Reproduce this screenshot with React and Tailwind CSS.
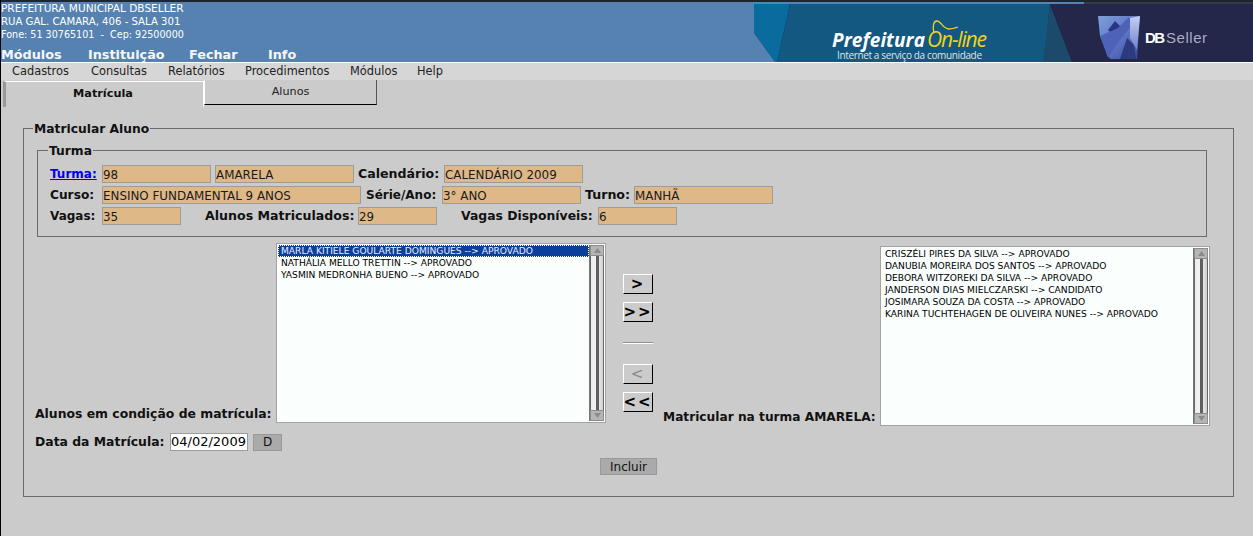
import React from 'react';

const font = { fontFamily: '"DejaVu Sans", sans-serif' };

function Logos() {
    return (
        <svg width="499" height="60" viewBox="754 2 499 60" className="shrink-0 block">
            <defs>
                <linearGradient id="cube" x1="0" y1="0" x2="1" y2="1">
                    <stop offset="0" stopColor="#7fa0dc" />
                    <stop offset="0.5" stopColor="#5f78c8" />
                    <stop offset="1" stopColor="#3a4a96" />
                </linearGradient>
                <linearGradient id="side" x1="0" y1="0" x2="0" y2="1">
                    <stop offset="0" stopColor="#c4d0f2" />
                    <stop offset="1" stopColor="#6f82c8" />
                </linearGradient>
            </defs>
            <rect x="754" y="2" width="499" height="60" fill="#1f2342" />
            <rect x="754" y="2" width="330" height="2" fill="#4f86b5" />
            <rect x="1084" y="2" width="169" height="2" fill="#3a3a3a" />
            <polygon points="754,4 790,4 777,62 775,62 754,33" fill="#0a6b9e" />
            <polygon points="754,33 775,62 754,62" fill="#5582b0" />
            <polygon points="790,4 1050,4 1044,62 777,62" fill="#135880" />
            <polygon points="1050,4 1072,62 1043,62" fill="#1b4a6b" />
            <polygon points="1072,62 1050,4 1253,4 1253,62" fill="#24264a" />
            <polygon points="1098,16 1140,16 1137,59 1110,59 1100,36" fill="url(#cube)" />
            <polygon points="1115,21 1124,30 1112,34 1108,30" fill="#2a3484" />
            <polygon points="1100,36 1118,28 1128,18 1138,18 1120,40 1108,58" fill="#4e63b8" />
            <polygon points="1120,59 1127,38 1134,45 1136,59" fill="#2c3a80" />
            <polygon points="1130,18 1140,16 1137,50 1130,38" fill="url(#side)" />
            <text x="832" y="47" fontFamily="Open Sans, sans-serif" fontWeight="700" fontStyle="italic" fontSize="19" textLength="93" fill="#ffffff">Prefeitura</text>
            <text x="927" y="47" fontFamily="Open Sans, sans-serif" fontStyle="italic" fontSize="21" textLength="60" fill="#f2d21a">On-line</text>
            <path d="M934 33 C932 25 934 21 937 21 C941 21 943 29 949 29 C952 29 955 28 958 27" fill="none" stroke="#f2d21a" strokeWidth="1.3" />
            <text x="837" y="59" fontFamily="Open Sans, sans-serif" fontSize="10" textLength="145" fill="#dde5ea">Internet a serviço da comunidade</text>
            <text x="1145" y="43" fontFamily="Liberation Sans, sans-serif" fontWeight="700" fontSize="15" textLength="20" fill="#ffffff">DB</text>
            <text x="1166" y="43" fontFamily="Liberation Sans, sans-serif" fontSize="15" textLength="41" fill="#a9adc4">Seller</text>
        </svg>
    );
}

function Scrollbar() {
    return (
        <div className="w-[15px] shrink-0 flex flex-col bg-[#8a8a8a] border-l border-[#777]">
            <div className="h-[11px] bg-[#b5b5b5] border border-[#8b8b8b] flex items-center justify-center text-[#8a8a8a]">
                <svg width="7" height="5" viewBox="0 0 7 5"><polygon points="3.5,0 7,5 0,5" fill="currentColor" /></svg>
            </div>
            <div className="flex-1 flex justify-center bg-gradient-to-r from-[#ececec] via-[#f4f4f4] to-[#cfcfcf] border-x border-[#666]">
                <div className="w-[3px] bg-[#5f5f5f]"></div>
            </div>
            <div className="h-[11px] bg-[#b5b5b5] border border-[#8b8b8b] flex items-center justify-center text-[#8a8a8a]">
                <svg width="7" height="5" viewBox="0 0 7 5"><polygon points="0,0 7,0 3.5,5" fill="currentColor" /></svg>
            </div>
        </div>
    );
}

function ListBox({ items, selected }) {
    return (
        <div className="w-[330px] h-[180px] flex border border-[#a3a3a3] bg-[#fafffd] p-[1px] shrink-0">
            <div className="flex-1 text-[9.13px] leading-[12px] text-black whitespace-nowrap overflow-hidden">
                {selected && (
                    <div className="bg-[#0a3f9c] text-[#e8eeff] pl-[3px] h-[12px] outline-1 -outline-offset-1 outline-dotted outline-white">{selected}</div>
                )}
                {items.map((t) => (
                    <div key={t} className="pl-[3px] h-[12px]">{t}</div>
                ))}
            </div>
            <Scrollbar />
        </div>
    );
}

function Field({ w, children }) {
    return (
        <div className={`${w} h-[18px] shrink-0 bg-[#deb887] border border-[#9c9c9c] text-[11.9px] leading-[18px] text-[#1a1a1a] whitespace-nowrap overflow-hidden`}>
            {children}
        </div>
    );
}

function Label({ w, children }) {
    return <div className={`${w} shrink-0 font-bold text-[#111] whitespace-nowrap leading-[18px]`}>{children}</div>;
}

function MoveButton({ children, disabled }) {
    return (
        <div className={`w-[30px] h-[20px] flex items-center justify-center text-[15px] tracking-[2px] leading-none border-t border-l border-white border-b border-r border-b-black border-r-black ${disabled ? 'text-[#888] font-normal border-b-[#666] border-r-[#666]' : 'text-black font-bold'}`}>
            {children}
        </div>
    );
}

export default function App() {
    return (
        <div style={font} className="w-[1253px] h-[536px] overflow-hidden bg-[#cbcbcb] border-l border-black flex flex-col">
            {/* top banner */}
            <div className="h-[62px] shrink-0 flex justify-between bg-[#5582b0] border-t-2 border-[#1c2530]">
                <div className="text-white">
                    <div className="leading-[13px] whitespace-pre">
                        <div className="text-[10.55px]">PREFEITURA MUNICIPAL DBSELLER</div>
                        <div className="text-[10.15px]">RUA GAL. CAMARA, 406 - SALA 301</div>
                        <div className="text-[9.6px]">Fone: 51 30765101  -  Cep: 92500000</div>
                    </div>
                    <div className="flex text-[12.8px] font-bold leading-[16px] mt-[6px] text-[#f4f7fa]">
                        <div className="w-[87px]">Módulos</div>
                        <div className="w-[101px]">Instituição</div>
                        <div className="w-[79px]">Fechar</div>
                        <div>Info</div>
                    </div>
                </div>
                <Logos />
            </div>

            {/* menu */}
            <div className="h-[18px] shrink-0 flex items-center bg-[#d6d6d6] border-t border-white pl-[11px] pt-[1px] text-[11.4px] text-[#222]">
                <div className="w-[79px]">Cadastros</div>
                <div className="w-[77px]">Consultas</div>
                <div className="w-[77px]">Relatórios</div>
                <div className="w-[105px]">Procedimentos</div>
                <div className="w-[67px]">Módulos</div>
                <div>Help</div>
            </div>

            {/* tabs */}
            <div className="h-[26px] shrink-0 flex pl-[2px] items-start">
                <div className="w-[201px] h-[26px] mt-[1px] border-t border-white border-l-[3px] border-l-[#999] border-r border-r-white flex items-center justify-center text-[11.3px] font-bold text-[#111] pr-[3px]">
                    Matrícula
                </div>
                <div className="w-[173px] h-[25px] border-l border-white border-r border-r-[#555] border-b border-b-black flex items-center justify-center text-[11.2px] text-[#222]">
                    Alunos
                </div>
            </div>

            {/* form */}
            <fieldset className="ml-[22px] mt-[14px] w-[1211px] h-[377px] border border-[#6b6b6b] px-[11px] shrink-0">
                <legend className="ml-[-2px] px-[1px] pt-[2px] text-[12.3px] font-bold text-[#111] leading-[15px]">Matricular Aluno</legend>

                <fieldset className="h-[95px] w-[1170px] ml-[2px] border border-[#6b6b6b] mt-[5px] pl-[12px]">
                    <legend className="ml-[-2px] px-[1px] pt-[2px] text-[12.3px] font-bold text-[#111] leading-[15px]">Turma</legend>
                    <div className="flex flex-col gap-[3px] mt-[6px]">
                        <div className="flex">
                            <Label w="w-[52px] text-[12px]"><span className="text-[#0000ee] underline">Turma:</span></Label>
                            <Field w="w-[109px]">98</Field>
                            <div className="w-[4px]"></div>
                            <Field w="w-[139px]">AMARELA</Field>
                            <Label w="w-[90px] pl-[4px] text-[12.6px]">Calendário:</Label>
                            <Field w="w-[139px]">CALENDÁRIO 2009</Field>
                        </div>
                        <div className="flex">
                            <Label w="w-[52px] text-[12.2px]">Curso:</Label>
                            <Field w="w-[259px]">ENSINO FUNDAMENTAL 9 ANOS</Field>
                            <Label w="w-[81px] pl-[5px] text-[12px]">Série/Ano:</Label>
                            <Field w="w-[139px]">3° ANO</Field>
                            <Label w="w-[53px] pl-[4px] text-[12.6px]">Turno:</Label>
                            <Field w="w-[139px]">MANHÃ</Field>
                        </div>
                        <div className="flex">
                            <Label w="w-[52px] text-[12px]">Vagas:</Label>
                            <Field w="w-[79px]">35</Field>
                            <Label w="w-[177px] pl-[24px] text-[12.6px]">Alunos Matriculados:</Label>
                            <Field w="w-[79px]">29</Field>
                            <Label w="w-[161px] pl-[24px] text-[12.4px]">Vagas Disponíveis:</Label>
                            <Field w="w-[79px]">6</Field>
                        </div>
                    </div>
                </fieldset>

                <div className="flex items-end mt-[5px] h-[184px]">
                    <Label w="w-[241px] text-[12.4px] pb-[3px]">Alunos em condição de matrícula:</Label>
                    <div className="mb-[3px]">
                        <ListBox
                            selected="MARLA KITIELE GOULARTE DOMINGUES --> APROVADO"
                            items={['NATHÁLIA MELLO TRETTIN --> APROVADO', 'YASMIN MEDRONHA BUENO --> APROVADO']}
                        />
                    </div>
                    <div className="w-[57px] pl-[17px] self-start flex flex-col pt-[32px] shrink-0">
                        <MoveButton>&gt;</MoveButton>
                        <div className="h-[8px]"></div>
                        <MoveButton>&gt;&gt;</MoveButton>
                        <div className="h-[20px]"></div>
                        <div className="w-[30px] h-[2px] bg-[#8f8f8f] border-b border-white"></div>
                        <div className="h-[20px]"></div>
                        <MoveButton disabled>&lt;</MoveButton>
                        <div className="h-[8px]"></div>
                        <MoveButton>&lt;&lt;</MoveButton>
                    </div>
                    <Label w="w-[217px] text-[12.2px]">Matricular na turma AMARELA:</Label>
                    <ListBox
                        items={[
                            'CRISZÉLI PIRES DA SILVA --> APROVADO',
                            'DANUBIA MOREIRA DOS SANTOS --> APROVADO',
                            'DEBORA WITZOREKI DA SILVA --> APROVADO',
                            'JANDERSON DIAS MIELCZARSKI --> CANDIDATO',
                            'JOSIMARA SOUZA DA COSTA --> APROVADO',
                            'KARINA TUCHTEHAGEN DE OLIVEIRA NUNES --> APROVADO',
                        ]}
                    />
                </div>

                <div className="flex items-center mt-[7px] h-[18px]">
                    <Label w="w-[135px] text-[12.4px]">Data da Matrícula:</Label>
                    <div className="w-[78px] h-[18px] bg-white border border-[#9c9c9c] text-[13px] leading-[16px] text-black shrink-0 whitespace-nowrap overflow-hidden">04/02/2009</div>
                    <div className="ml-[5px] w-[29px] h-[17px] bg-[#aaaaaa] border border-[#999] text-[12px] flex items-center justify-center text-[#111]">D</div>
                </div>

                <div className="flex justify-center mt-[7px]">
                    <div className="w-[57px] h-[17px] bg-[#aaaaaa] border border-[#999] text-[12px] flex items-center justify-center text-[#111]">Incluir</div>
                </div>
            </fieldset>
        </div>
    );
}
